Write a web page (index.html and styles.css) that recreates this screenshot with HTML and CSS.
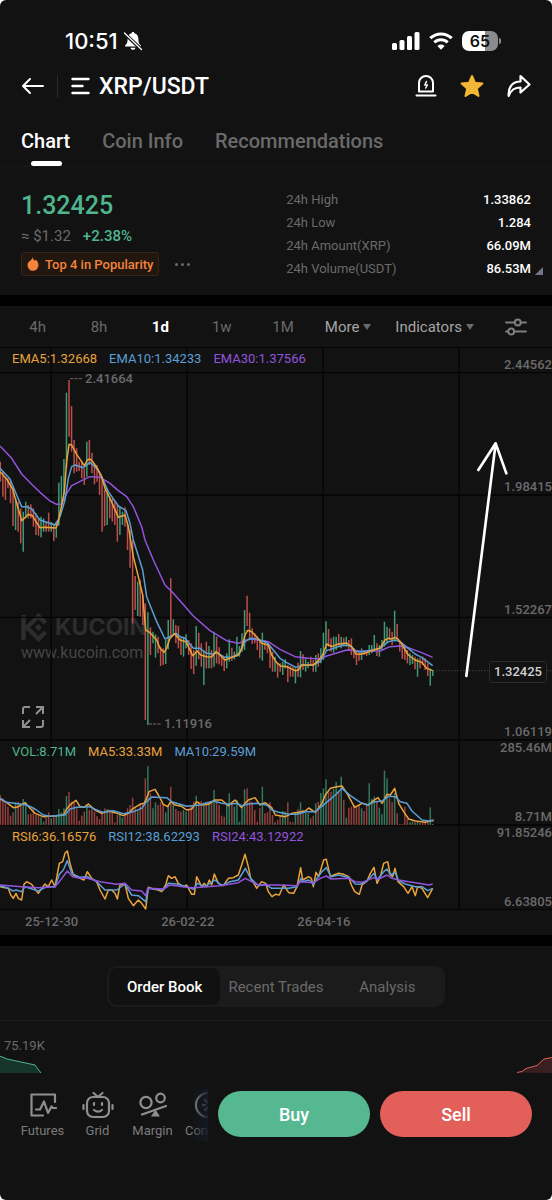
FILE: index.html
```html
<!DOCTYPE html>
<html lang="en">
<head>
  <meta charset="UTF-8">
  <meta name="viewport" content="width=device-width, initial-scale=1.0">
  <title>XRP/USDT</title>
  <link rel="stylesheet" href="styles.css">
</head>
<body>
  <div class="app">
    <div class="status">
      <span class="time">10:51</span>
      <svg class="bell" width="20" height="20" viewBox="0 0 20 20">
        <path d="M10 1c.9 0 1.400.600 1.400 1.300 2.700.7 4 2.900 4 5.500 0 4 .900 5.200 2.300 6.500.5.600.2 1.300-.6 1.300H2.900c-.8 0-1.100-.7-.6-1.300C3.700 13 4.600 11.800 4.600 7.800c0-2.600 1.300-4.800 4-5.500C8.600 1.600 9.100 1 10 1zM7.500 16.700h5c-.3 1.400-1.300 2.100-2.500 2.100s-2.200-.7-2.500-2.100z" fill="#fff"/>
        <path d="M1.500 2.500l17 16" stroke="#121212" stroke-width="3.600"/>
        <path d="M1.500 2l17 16.500" stroke="#fff" stroke-width="1.300" stroke-linecap="round"/>
      </svg>
      <span class="spacer"></span>
      <svg width="28" height="18" viewBox="0 0 28 18" fill="#fff">
        <rect x="0" y="11" width="5" height="7" rx="1.500"/>
        <rect x="7.500" y="8" width="5" height="10" rx="1.500"/>
        <rect x="15" y="4" width="5" height="14" rx="1.500"/>
        <rect x="22.500" y="0" width="5" height="18" rx="1.500"/>
      </svg>
      <svg width="24" height="18" viewBox="0 0 24 18" fill="none" stroke="#fff" stroke-width="3">
        <path d="M1.300 6.200a15.400 15.400 0 0 1 21.400 0"/>
        <path d="M5.300 10.400a9.600 9.600 0 0 1 13.400 0"/>
        <path d="M12 17.800l-3.600-3.800a5.200 5.200 0 0 1 7.200 0z" fill="#fff" stroke="none"/>
      </svg>
      <div class="battery">65</div>
    </div>

    <header class="header">
      <button class="icon-btn" aria-label="Back">
        <svg width="24" height="20" viewBox="0 0 24 20" fill="none" stroke="#fff" stroke-width="2" stroke-linecap="round" stroke-linejoin="round"><path d="M22 10H2M9 3l-7 7 7 7"/></svg>
      </button>
      <span class="divider"></span>
      <button class="pair">
        <svg width="19" height="18" viewBox="0 0 19 18" stroke="#fff" stroke-width="2.400" stroke-linecap="round"><path d="M1.500 2h16M1.500 9h10M1.500 16h16"/></svg>
        <span>XRP/USDT</span>
      </button>
      <span class="spacer"></span>
      <button class="icon-btn" aria-label="Alert">
        <svg width="22" height="24" viewBox="0 0 22 24" fill="none" stroke="#fff" stroke-width="2" stroke-linecap="round" stroke-linejoin="round"><path d="M4 17.500V9a7 7 0 0 1 14 0v8.500zM1.500 21.500h19"/><path d="M11.500 7.500L9.800 11h2.600L10.700 14" stroke-width="1.500"/></svg>
      </button>
      <button class="icon-btn" aria-label="Favourite">
        <svg width="24" height="24" viewBox="0 0 24 24" fill="#f2b636" stroke="#f2b636" stroke-width="2" stroke-linejoin="round"><path d="M12 2l3 6.800 7.400.7-5.600 4.900 1.700 7.500L12 18l-6.500 3.900 1.700-7.500L1.600 9.500 9 8.800z"/></svg>
      </button>
      <button class="icon-btn" aria-label="Share">
        <svg width="24" height="24" viewBox="0 0 24 24" fill="none" stroke="#fff" stroke-width="2.200" stroke-linejoin="round"><path d="M13.500 7.500V2L22.500 10.500l-9 8v-5c-6 0-9.500 2-11.800 8.500C1 13.500 5 7.500 13.500 7.500z"/></svg>
      </button>
    </header>

    <nav class="tabs">
      <button class="tab active">Chart</button>
      <button class="tab">Coin Info</button>
      <button class="tab">Recommendations</button>
    </nav>

    <section class="summary">
      <div class="quote">
        <div class="price">1.32425</div>
        <div class="change"><span>≈ $1.32</span><span class="up">+2.38%</span></div>
        <div class="tags">
          <button class="badge">
            <svg width="12" height="14" viewBox="0 0 12 14" fill="#f5833c"><path d="M5.500 0c.3 2 1.300 2.800 2.300 3.800.5-.3.700-.7.700-1.300C10.500 4 11.500 6 11.500 8.300a5.500 5.500 0 0 1-11 0C.5 5.500 2 4.500 3.500 3.500 4.500 2.700 5.200 1.700 5.500 0z"/></svg>
            Top 4 in Popularity
          </button>
          <button class="dots" aria-label="More tags"><i></i><i></i><i></i></button>
        </div>
      </div>
      <dl class="stats">
        <div><dt>24h High</dt><dd>1.33862</dd></div>
        <div><dt>24h Low</dt><dd>1.284</dd></div>
        <div><dt>24h Amount(XRP)</dt><dd>66.09M</dd></div>
        <div><dt>24h Volume(USDT)</dt><dd class="corner">86.53M</dd></div>
      </dl>
    </section>

    <section class="chart-card">
      <div class="frames">
        <button>4h</button>
        <button>8h</button>
        <button class="active">1d</button>
        <button>1w</button>
        <button>1M</button>
        <button class="drop more">More</button>
        <button class="drop">Indicators</button>
        <button class="settings" aria-label="Chart settings">
          <svg width="22" height="18" viewBox="0 0 22 18" fill="none" stroke="#7e7e7e" stroke-width="2" stroke-linecap="round"><path d="M1 4.500h8.500M16 4.500h5M1 13.500h2M9.500 13.500H21"/><circle cx="12.800" cy="4.500" r="2.900"/><circle cx="6.200" cy="13.500" r="2.900"/></svg>
        </button>
      </div>

      <div class="plot">
        <div class="watermark">
          <div class="brand">
            <svg width="27" height="29" viewBox="0 0 27 29" fill="none" stroke="#2b2d2f" stroke-width="4.500"><path d="M2.500 2v25M24.500 10l-7-7L6 14.500 17.500 26l7-7"/><path d="M17.500 11l3.500 3.500-3.500 3.500-3.500-3.500z" fill="#2b2d2f" stroke="none"/></svg>
            <b>KUCOIN</b>
          </div>
          <div>www.kucoin.com</div>
        </div>
        <svg id="plot" class="canvas" viewBox="0 0 1656 1689" preserveAspectRatio="none"></svg>

        <div class="pane price-pane">
          <div class="legend">
            <span class="c-orange">EMA5:1.32668</span>
            <span class="c-blue">EMA10:1.34233</span>
            <span class="c-purple">EMA30:1.37566</span>
          </div>
          <div class="axis"><span>2.44562</span><span>1.98415</span><span>1.52267</span><span>1.06119</span></div>
          <span class="mark high">2.41664</span>
          <span class="mark low">1.11916</span>
          <span class="last">1.32425</span>
          <button class="expand" aria-label="Full screen">
            <svg width="22" height="22" viewBox="0 0 22 22" fill="none" stroke="#909090" stroke-width="2"><path d="M1 8V3q0-2 2-2h5M21 14v5q0 2-2 2h-5M14 1h7v7M21 1l-7 7M8 21H1v-7M1 21l7-7"/></svg>
          </button>
        </div>
        <div class="pane volume-pane">
          <div class="legend">
            <span class="c-green">VOL:8.71M</span>
            <span class="c-orange">MA5:33.33M</span>
            <span class="c-blue">MA10:29.59M</span>
          </div>
          <div class="axis"><span>285.46M</span><span>8.71M</span></div>
        </div>
        <div class="pane rsi-pane">
          <div class="legend">
            <span class="c-orange">RSI6:36.16576</span>
            <span class="c-blue">RSI12:38.62293</span>
            <span class="c-purple">RSI24:43.12922</span>
          </div>
          <div class="axis"><span>91.85246</span><span>6.63805</span></div>
        </div>
      </div>
      <div class="dates"><span>25-12-30</span><span>26-02-22</span><span>26-04-16</span></div>
    </section>

    <section class="book">
      <div class="segment">
        <button class="active">Order Book</button>
        <button>Recent Trades</button>
        <button>Analysis</button>
      </div>
      <div class="depth">
        <span>75.19K</span>
        <svg class="bids" width="42" height="17" viewBox="0 0 42 17"><path d="M0 0l7 3 14 3 14 3 6 8H0z" fill="#17352a"/><path d="M0 0l7 3 14 3 14 3 6 8" fill="none" stroke="#4fb58c"/></svg>
        <svg class="asks" width="36" height="17" viewBox="0 0 36 17"><path d="M1 16.500l5-1 4-3 11-3 7-6.500 8-1.500V17z" fill="#3a1f20"/><path d="M1 16.500l5-1 4-3 11-3 7-6.500 8-1.500" fill="none" stroke="#e2605c"/></svg>
      </div>
    </section>

    <footer class="actions">
      <div class="shortcuts">
        <button>
          <svg width="28" height="28" viewBox="0 0 28 28" fill="none" stroke="#8f8f8f" stroke-width="2.200" stroke-linecap="round" stroke-linejoin="round"><path d="M26 11V3.500H2.500v21H14M7 18.500h4l4-8 4 11.500 3.500-6.500 1.500 1.500h3"/></svg>
          Futures
        </button>
        <button>
          <svg width="32" height="28" viewBox="0 0 32 28" fill="none" stroke="#8f8f8f" stroke-width="2.200" stroke-linecap="round"><rect x="5" y="6" width="22" height="20" rx="6"/><path d="M16 6l-4.500-4M16 6l4.500-4M1.500 14v4M30.500 14v4M12 12v2M20 12v2M12 19q4 3.200 8 0"/></svg>
          Grid
        </button>
        <button>
          <svg width="28" height="28" viewBox="0 0 28 28" fill="none" stroke="#8f8f8f" stroke-width="2.200" stroke-linecap="round"><circle cx="7" cy="11.500" r="5.600"/><circle cx="21.500" cy="7" r="4.300"/><path d="M3 23.500l24-8.500"/><path d="M16.500 20.500l2.500 4h-5z" fill="#8f8f8f"/></svg>
          Margin
        </button>
        <button>
          <svg width="28" height="28" viewBox="0 0 28 28" fill="none" stroke="#8f8f8f" stroke-width="2.200" stroke-linecap="round"><circle cx="14" cy="14" r="12"/><path d="M11 9l6 5-6 5M9 14h2"/></svg>
          Convert
        </button>
      </div>
      <button class="trade buy">Buy</button>
      <button class="trade sell">Sell</button>
    </footer>
  </div>

  <script src="chart.js"></script>
</body>
</html>
```

FILE: styles.css
```css
* {
  box-sizing: border-box;
}
body {
  margin: 0;
  background: #fff;
  font-family: Roboto, "Liberation Sans", sans-serif;
  color: #fff;
}
button {
  margin: 0;
  padding: 0;
  border: none;
  background: none;
  font: inherit;
  color: inherit;
  cursor: pointer;
}
svg {
  display: block;
  flex: none;
}
.app {
  background: #121212;
  border-radius: 6px;
  overflow: hidden;
}
.spacer {
  flex: 1;
}

/* status bar */
.status {
  display: flex;
  align-items: center;
  height: 64px;
  padding: 18px 54px 0 65px;
}
.time {
  font-family: Inter, sans-serif;
  font-size: 22px;
  font-weight: 500;
  margin-right: 5px;
}
.status svg + svg {
  margin: 0 9px;
}
.battery {
  position: relative;
  width: 36px;
  height: 20px;
  border-radius: 7px;
  background: linear-gradient(90deg, #fff 65%, #8c8c8c 65%);
  color: #111;
  font: 600 16px/20px Inter, sans-serif;
  text-align: center;
}
.battery::after {
  content: "";
  position: absolute;
  right: -3px;
  top: 7px;
  width: 2px;
  height: 6px;
  border-radius: 0 2px 2px 0;
  background: #8c8c8c;
}

/* header */
.header {
  display: flex;
  align-items: center;
  height: 44px;
  padding: 0 21px;
}
.header .icon-btn + .icon-btn {
  margin-left: 23px;
}
.divider {
  width: 1px;
  height: 23px;
  margin: 0 13px 0 12px;
  background: #2a2a2a;
}
.pair {
  display: flex;
  align-items: center;
  gap: 9px;
  font-size: 23px;
  font-weight: 500;
}
.tabs {
  display: flex;
  gap: 32px;
  height: 59px;
  padding: 0 21px;
  border-bottom: 1px solid #181818;
}
.tab {
  position: relative;
  padding-top: 7px;
  font-size: 20px;
  font-weight: 500;
  color: #6a6a6a;
}
.tab.active {
  color: #fff;
}
.tab.active::after {
  content: "";
  position: absolute;
  left: 50%;
  bottom: 0;
  width: 31px;
  height: 5px;
  margin-left: -15px;
  border-radius: 3px;
  background: #fff;
}

/* price summary */
.summary {
  display: flex;
  justify-content: space-between;
  height: 128px;
  padding: 21px 21px 0;
}
.price {
  font-size: 25px;
  line-height: 36px;
  font-weight: 500;
  color: #4fb58c;
}
.change {
  display: flex;
  gap: 12px;
  font-size: 15px;
  line-height: 24px;
  color: #6a6a6a;
}
.up {
  color: #4fb58c;
}
.change .up {
  font-weight: 500;
}
.tags {
  display: flex;
  align-items: center;
  gap: 16px;
  margin-top: 4px;
}
.badge {
  display: flex;
  align-items: center;
  gap: 6px;
  height: 24px;
  padding: 0 5px;
  border: 1px solid #3a2418;
  border-radius: 3px;
  background: #21170f;
  font-size: 13px;
  font-weight: 500;
  color: #f5833c;
}
.dots {
  display: flex;
  gap: 3px;
}
.dots i {
  width: 3px;
  height: 3px;
  border-radius: 50%;
  background: #6a6a6a;
}
.stats {
  width: 48%;
  margin: 0;
  font-size: 13px;
  line-height: 23px;
}
.stats div {
  display: flex;
  justify-content: space-between;
}
.stats dt {
  color: #6a6a6a;
}
.stats dd {
  margin: 0;
  font-weight: 500;
}
.corner {
  position: relative;
}
.corner::after {
  content: "";
  position: absolute;
  right: -12px;
  bottom: 5px;
  border-left: 8px solid transparent;
  border-bottom: 8px solid #6f7785;
}

/* chart */
.chart-card {
  border-top: 11px solid #000;
  border-bottom: 11px solid #000;
}
.frames {
  display: flex;
  align-items: center;
  height: 41px;
  padding: 0 25px 0 7px;
  font-size: 15px;
  color: #6a6a6a;
}
.frames button {
  flex: 1;
}
.frames .active {
  color: #fff;
  font-weight: 700;
}
.frames .drop {
  display: flex;
  flex: none;
  align-items: center;
  gap: 4px;
  margin-left: 24px;
  color: #a5a5a5;
}
.frames .more {
  margin-left: 11px;
}
.drop::after {
  content: "";
  border: 4px solid transparent;
  border-top: 6px solid #6a6a6a;
  border-bottom: 0;
}
.frames .settings {
  flex: none;
  margin-left: 31px;
}
.plot {
  position: relative;
  height: 563px;
}
.canvas {
  position: absolute;
  left: 0;
  top: 0;
  width: 100%;
  height: 100%;
}
.watermark {
  position: absolute;
  left: 21px;
  top: 264px;
  font-size: 16px;
  line-height: 20px;
  color: #454545;
}
.brand {
  display: flex;
  align-items: center;
  gap: 7px;
  height: 32px;
  color: #2b2d2f;
}
.brand b {
  font-family: Inter, sans-serif;
  font-size: 23px;
}
.pane {
  position: relative;
  display: flex;
  justify-content: space-between;
  font-size: 13px;
  line-height: 16px;
}
.price-pane {
  height: 393px;
}
.volume-pane {
  height: 85px;
}
.rsi-pane {
  height: 85px;
}
.legend {
  display: flex;
  gap: 12px;
  padding: 4px 0 0 12px;
}
.axis {
  display: flex;
  flex-direction: column;
  justify-content: space-between;
  text-align: right;
  font-weight: 500;
  color: #6a6a6a;
}
.price-pane .axis {
  padding-top: 10px;
}
.mark {
  position: absolute;
  font-weight: 500;
  color: #6a6a6a;
}
.mark.high {
  left: 85px;
  top: 24px;
}
.mark.low {
  left: 164px;
  top: 369px;
}
.last {
  position: absolute;
  right: 5px;
  top: 314px;
  padding: 2px 4px;
  border: 1px solid #2c2c2c;
  border-radius: 3px;
  background: #121212;
  font-weight: 500;
  color: #d0d0d0;
}
.expand {
  position: absolute;
  left: 22px;
  bottom: 12px;
}
.c-orange {
  color: #e8a33d;
}
.c-blue {
  color: #5a9fd6;
}
.c-purple {
  color: #9254de;
}
.c-green {
  color: #4fb58c;
}
.dates {
  display: flex;
  gap: 83px;
  height: 25px;
  padding: 4px 25px;
  font-size: 13px;
  line-height: 16px;
  font-weight: 500;
  color: #6a6a6a;
}

/* order book */
.book {
  padding-top: 20px;
}
.segment {
  display: flex;
  width: 338px;
  height: 41px;
  margin: 0 auto;
  padding: 2px;
  border-radius: 10px;
  background: #1b1b1b;
  font-size: 15px;
  color: #6a6a6a;
}
.segment button {
  flex: 1;
}
.segment .active {
  border-radius: 8px;
  background: #111;
  color: #fff;
  font-weight: 500;
}
.depth {
  position: relative;
  height: 53px;
  margin-top: 13px;
  border-top: 1px solid #1c1c1c;
  padding: 17px 4px;
  font-size: 13px;
  line-height: 16px;
  color: #6a6a6a;
}
.bids,
.asks {
  position: absolute;
  bottom: 0;
}
.bids {
  left: 0;
}
.asks {
  right: 0;
}

/* bottom actions */
.actions {
  display: flex;
  gap: 10px;
  height: 127px;
  padding: 16px 20px 0 0;
}
.shortcuts {
  position: relative;
  display: flex;
  width: 208px;
  height: 52px;
  padding-left: 15px;
  overflow: hidden;
  font-size: 13px;
  line-height: 16px;
  color: #7c7c7c;
}
.shortcuts::after {
  content: "";
  position: absolute;
  right: 0;
  top: 0;
  width: 18px;
  height: 52px;
  background: linear-gradient(90deg, rgba(21, 26, 36, 0), rgba(21, 26, 36, 0.9));
}
.shortcuts button {
  display: flex;
  flex: none;
  flex-direction: column;
  align-items: center;
  gap: 4px;
  width: 55px;
  padding-top: 2px;
}
.trade {
  flex: 1;
  height: 46px;
  margin-top: 2px;
  border-radius: 23px;
  font-size: 18px;
  font-weight: 500;
}
.buy {
  background: #55b890;
}
.sell {
  background: #e35f5a;
}
```

FILE: chart.js
```js
// The canvas has three units per pixel. Long series are kept in runs:
// each run carries its own origin, followed by its values.
const plot = document.getElementById('plot');
const STEP = 7.632;
const UP = '#3f9a76';
const DOWN = '#bd4f4b';

function add(tag, attrs) {
  const el = document.createElementNS('http://www.w3.org/2000/svg', tag);
  for (const key in attrs) el.setAttribute(key, attrs[key]);
  plot.appendChild(el);
}

function path(d, color, width, extra) {
  add('path', { d, fill: 'none', stroke: color, 'stroke-width': width, 'stroke-linejoin': 'round', ...extra });
}

function line(color, runs) {
  const points = [];
  runs.forEach(([dx, dy, values]) => {
    values.split(' ').forEach(pair => {
      const [x, y] = pair.split(',').map(Number);
      points.push((x + dx) + ' ' + (y + dy));
    });
  });
  path('M' + points.join('L'), color, 4.5);
}

// grid
[1, 77, 444, 811, 1179, 1434, 1687].forEach(y => path(`M0 ${y}H1656`, '#050505', 4));
[154, 562, 970, 1378].forEach(x => path(`M${x} 0V1687`, '#050505', 4));

// candles: direction, high, low
const candles = [];
[
  [-6, 'r350,410 r380,455 r395,465 r400,430 r405,475 r430,543 g460,555 r470,560 r490,595 g500,620 g470,520 r480,520 r478,520 r490,545 r505,570 r520,572 g515,577 g520,560 r530,560 r503,560 g530,560 r535,588 g530,578 g413,542 g393,485 g342,450 g143,370 r105,275 r183,320 r285,385 r310,380 r350,378 r350,400 r370,420 g290,395 r285,360 r323,385 r355,418 r360,410 r385,450 r395,560 r435,543 g445,540 r455,520 r462,530 r470,540 r480,590 g485,570 g500,540 r487,545'],
  [579, 'r-50,30 r-30,83 r0,250 r108,210 g125,228 r120,230 r165,255 r190,540 g217,555 r262,345 g275,310 g283,353 r290,340 r320,378 r325,375 g300,372 g240,328 r115,295 g238,285 r255,310 r258,325 r295,345 g290,350 g283,325 r300,345 r310,387 r330,402 g258,377 r278,358 r310,380 g335,435 r305,385 g318,385 r330,385 g275,380 r290,370 r322,373 r350,378 r355,393 g340,385 g298,365 r323,362 g335,358 g290,350 g318,350 g280,335 g210,330 r167,258 r218,300 r265,312'],
  [579, 'r280,310 r290,330 r300,355 g278,362 r300,330 r312,340 r320,383 r335,395 g350,395 r370,413 r370,395 g365,405 g358,385 r375,427 r378,410 r380,410 g385,430 r368,410 g333,412 r343,390 g355,395 g365,385 r350,375 r360,395 g345,395 r340,380 g325,370 g278,360 g244,330 r267,320 r295,335 g290,338 g290,330 r282,320 g290,325 r293,320 g290,320 r300,330 r295,345 r325,355 r335,375 r335,362 g325,360 r330,345 r330,348 g315,345 g315,340 g285,335 r310,348 g315,350'],
  [579, 'g300,330 g245,320 g260,310 r265,300 r275,315 g212,305 r252,300 r300,335 r310,357 r315,360 r330,370 g340,375 g345,372 r350,388 g355,410 r355,385 r350,375 r355,390 r370,408 g385,437 g390,408']
].forEach(([dy, values]) => {
  values.split(' ').forEach(v => {
    const [high, low] = v.slice(1).split(',').map(Number);
    candles.push({ color: v[0] === 'g' ? UP : DOWN, high: high + dy, low: low + dy });
  });
});
candles.forEach((c, i) => path(`M${1 + i * STEP} ${c.high}V${c.low}`, c.color, 4.5));

// volume
const volume = [
  90, 80, 65, 55, 28, 38, 68, 70, 65, 78, 68, 32, 34, 48, 30, 28, 25, 10, 22, 38, 20, 24, 28, 48, 38, 50, 87, 100, 70, 66,
  50, 13, 28, 40, 62, 45, 50, 40, 26, 18, 40, 50, 48, 46, 44, 8, 30, 35, 22, 30, 50, 60, 82, 50, 45, 65, 62, 140, 176, 95,
  50, 68, 60, 68, 62, 38, 60, 115, 68, 48, 42, 40, 45, 40, 45, 60, 70, 88, 70, 72, 68, 70, 68, 72, 105, 70, 60, 28, 25, 60,
  95, 68, 55, 75, 10, 50, 107, 110, 72, 70, 45, 10, 50, 115, 35, 38, 68, 30, 8, 15, 28, 42, 40, 68, 10, 8, 35, 48, 68, 45,
  38, 35, 20, 28, 65, 70, 96, 110, 137, 98, 100, 108, 130, 100, 145, 75, 22, 52, 55, 60, 58, 60, 50, 42, 60, 125, 78, 85, 70, 52,
  32, 163, 140, 80, 68, 96, 35, 3, 3, 55, 18, 8, 10, 8, 12, 6, 6, 8, 12, 53, 3
];
volume.forEach((v, i) => path(`M${1 + i * STEP} 1434v${-v}`, candles[i].color, 4.5, { opacity: 0.75 }));

const ORANGE = '#eba43a';
const BLUE = '#5a9fd6';
const PURPLE = '#9254de';

// EMA 30, 10, 5
line(PURPLE, [
  [0, -6, '0,303 35,340 65,387 95,418 120,442 150,468 170,478 185,477 200,445 215,422 245,407 270,395 300,397 330,415 355,437 380,455 400,485 425,545'],
  [0, 579, '435,0 460,60 495,135 520,160'],
  [540, 579, '0,182 40,228 90,272 140,302 175,310 200,300 215,297 265,305 300,328 345,350 385,355 420,357 440,348 500,330 530,332'],
  [1080, 579, '0,334 60,333 90,320 120,318 150,325 185,338 218,352']
]);
line(BLUE, [
  [0, -6, '0,370 30,402 50,450 65,485 80,485 95,492 120,525 165,540 180,515 195,465 205,400 215,365 225,360 250,368 270,352 290,370 305,395 325,440 355,483 378,497 390,535'],
  [0, 579, '400,0 428,90 440,170 470,245 495,297 510,290 528,280'],
  [540, 579, '0,290 15,295 40,325 60,325 80,340 100,342 110,338 135,352 155,352 180,338 195,305 210,295 230,297 262,308 280,330 300,355 320,368 348,382 365,376 400,375 420,365 440,332 460,325 490,315 510,317 528,333'],
  [1080, 579, '0,336 40,330 60,325 85,305 105,300 120,305 145,325 165,342 185,352 218,377']
]);
line(ORANGE, [
  [0, -6, '0,380 20,402 38,432 50,475 65,527 75,518 85,508 97,512 108,530 120,548 135,547 168,549 175,530 185,480 193,440 200,350 207,298 215,300 230,328 253,362 262,345 270,342 280,352 295,375 305,395 315,430 330,460 355,517 375,510 385,545'],
  [0, 579, '400,50 415,110 428,165 437,270 450,278 470,300 480,325 492,337 500,325 510,295 524,281'],
  [540, 579, '0,300 18,305 38,347 52,333 62,345 80,350 95,351 108,335 120,345 135,360 155,352 175,345 185,325 195,285 203,271 215,275 230,290 245,310 265,315 275,345 290,368 302,378 320,380 345,392 355,390 365,375 400,375 415,362 428,345 440,312 455,320 475,312 500,309 515,320 528,342'],
  [1080, 579, '0,343 20,338 40,330 60,325 75,300 85,295 95,297 105,292 115,298 125,312 145,345 165,360 185,367 200,385 218,392']
]);

// volume averages
line(ORANGE, [
  [0, 1164, '0,192 20,203 40,218 55,215 75,203 90,220 105,235 130,245 160,243 190,240 200,222 212,208 228,196 240,215 252,217 265,207 285,225 305,235 325,228 345,233 370,242 385,235 400,220 420,208 432,205 440,190 447,170 465,163 475,180 490,208 503,215 512,200 525,210 545,214 560,225 575,222 590,200 605,210 625,208 645,195 665,195 685,212 705,195 725,218 735,205 745,195 765,188 780,210 795,203 815,218'],
  [816, 1164, '10,240 40,245 60,235 80,232 100,228 110,219 130,232 150,205 160,180 175,160 195,155 210,153 225,175 248,217 270,205 290,210 300,200 318,188 330,205 345,178 355,180 368,160 380,205 395,230 410,252 430,258 460,262 475,257 485,257']
]);
line(BLUE, [
  [0, 1164, '0,190 20,202 60,207 80,210 105,222 130,240 150,244 195,240 210,222 230,217 268,215 290,225 310,232 340,227 370,236 400,230 425,220 440,200 455,186 500,188 515,200 560,214 600,210 640,198 665,205 690,208 710,205 725,212 745,207 770,205 800,210'],
  [816, 1164, '0,225 20,232 50,238 75,238 100,230 130,230 160,205 190,180 210,160 235,182 265,202 285,210 310,200 330,198 350,184 370,185 385,200 405,205 420,228 450,255 470,258 485,255']
]);

// RSI 6, 12, 24
line(ORANGE, [
  [0, 1164, '0,455 15,458 25,460 32,480 40,490 48,475 55,490 65,495 72,448 80,440 95,448 115,475 125,460 135,447 145,455 155,435 165,455 178,385 188,380 195,355 202,348 210,385 220,420 235,428 252,435 262,410 275,430 290,440 300,465 315,492 325,465 335,465 345,475 352,492 360,450 375,447 385,490 400,512 415,495 425,505 437,522 445,457 460,462 475,465 485,470 497,450 505,422 515,430 525,425 535,445 550,455 560,450 575,478 583,478 590,425 605,455 613,445 620,455 628,435 635,450 643,417 655,445 670,452 685,430 700,428 715,420 725,390 735,358 745,395 752,430 765,450 770,460 785,440 797,445 805,470'],
  [816, 1164, '0,485 10,478 22,480 35,450 50,473 65,475 75,455 86,398 92,435 110,425 118,430 124,455 132,412 140,425 155,375 163,373 175,425 185,420 200,415 215,418 230,425 238,450 248,470 262,478 270,450 285,438 295,415 306,397 315,445 325,425 335,385 347,380 355,420 362,425 369,400 378,440 395,455 408,475 420,455 430,482 437,455 450,460 467,488 482,460']
]);
line(BLUE, [
  [0, 1164, '0,452 25,460 40,468 48,465 65,470 75,455 115,468 140,455 165,455 178,418 190,405 202,377 215,415 240,427 262,425 290,440 315,465 350,465 375,447 395,480 415,482 437,500 445,460 490,465 505,445 530,447 560,455 580,463 592,445 615,455 645,435 665,452 690,440 715,435 736,400 752,430 775,452 797,448 815,460'],
  [816, 1164, '20,460 50,460 75,455 87,430 92,440 110,435 125,448 135,430 150,410 163,398 177,425 200,420 232,428 250,447 265,448 285,438 306,415 315,435 335,410 345,402 355,420 369,412 380,437 400,447 430,455 450,455 467,467 482,460']
]);
line(PURPLE, [
  [0, 1164, '0,450 65,455 115,458 165,455 178,440 202,408 218,425 240,430 262,430 300,440 350,448 375,445 395,465 425,468 437,482 443,460 490,462 510,450 560,457 580,458 660,452 715,443 736,430 755,440 775,450'],
  [816, 1164, '24,450 75,452 85,440 125,443 145,430 163,423 177,432 230,430 250,440 270,442 306,428 320,432 345,420 360,430 380,435 410,440 440,445 470,450 482,447']
]);

// high and low leaders, last price line, trend arrow
path('M210 95H246M446 1131H484', '#6a6a6a', 3, { 'stroke-dasharray': '10 3' });
path('M1300 971H1656', '#555', 3, { 'stroke-dasharray': '3 6' });
path('M1399 987L1487 289M1435 369L1487 289L1519 379', '#fff', 8, { 'stroke-linecap': 'round' });
```
